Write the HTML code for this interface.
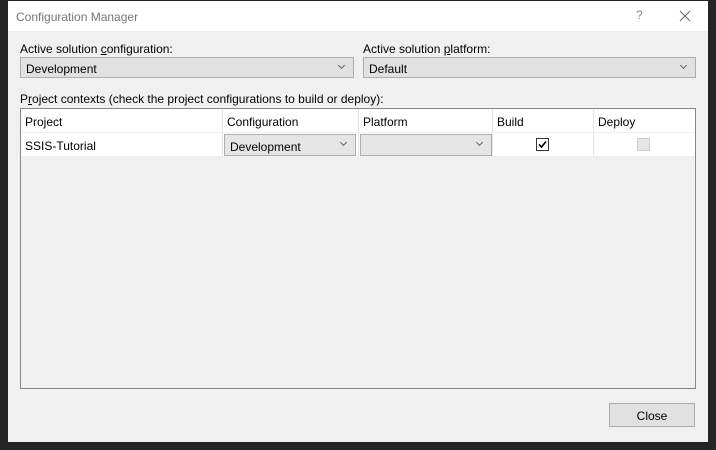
<!DOCTYPE html><html><head><style>
body{margin:0;width:716px;height:450px;background:#252526;position:relative;overflow:hidden;font-family:"Liberation Sans",sans-serif;font-size:12px;color:#000}
.dlg{position:absolute;left:8px;top:1px;width:700px;height:441px;background:#f0f0f0}
.t{position:absolute;left:0;top:0;width:700px;height:30px;background:#fff;}
.a{position:absolute}
.cb{position:absolute;height:21px;border:1px solid #adadad;background:#e1e1e1;box-sizing:border-box;padding:4px 5px 0;}
.dd:after{content:"";position:absolute;right:9px;top:5px;width:4px;height:4px;border-right:1px solid #666;border-bottom:1px solid #666;transform:rotate(45deg)}
.grid{position:absolute;left:12px;top:107px;width:676px;height:281px;border:1px solid #828790;box-sizing:border-box;background:#f0f0f0}
.cell{position:absolute;background:#fff;box-sizing:border-box;padding:6px 4px 0;border-right:1px solid #e5e5e5;border-bottom:1px solid #f0f0f0}
</style></head><body>
<div class="dlg">
<div class="t"><span class="a" style="left:8px;top:9px;color:#777;font-size:12px">Configuration Manager</span>
<span class="a" style="left:628px;top:7px;color:#888">?</span>
<svg class="a" style="left:671px;top:9px" width="12" height="12"><path d="M1 1L11 11M11 1L1 11" stroke="#666" stroke-width="1"/></svg></div>
<span class="a" style="left:12px;top:41px">Active solution <u>c</u>onfiguration:</span>
<div class="cb dd" style="left:12px;top:56px;width:334px">Development</div>
<span class="a" style="left:355px;top:41px">Active solution <u>p</u>latform:</span>
<div class="cb dd" style="left:355px;top:56px;width:333px">Default</div>
<span class="a" style="left:12px;top:91px">P<u>r</u>oject contexts (check the project configurations to build or deploy):</span>
<div class="grid">
<div class="cell" style="left:0;top:0;width:202px;height:24px">Project</div>
<div class="cell" style="left:202px;top:0;width:136px;height:24px">Configuration</div>
<div class="cell" style="left:338px;top:0;width:134px;height:24px">Platform</div>
<div class="cell" style="left:472px;top:0;width:101px;height:24px">Build</div>
<div class="cell" style="left:573px;top:0;width:101px;height:24px;border-right:none">Deploy</div>
<div class="cell" style="left:0;top:24px;width:202px;height:24px">SSIS-Tutorial</div>
<div class="cell" style="left:202px;top:24px;width:136px;height:24px;padding:0"><div class="cb dd" style="left:1px;top:1px;width:132px;height:22px;background:#e5e5e5;padding-top:5px">Development</div></div>
<div class="cell" style="left:338px;top:24px;width:134px;height:24px;padding:0"><div class="cb dd" style="left:1px;top:1px;width:132px;height:22px;background:#e5e5e5"></div></div>
<div class="cell" style="left:472px;top:24px;width:101px;height:24px"><svg class="a" style="left:43px;top:5px" width="13" height="13"><rect x=".5" y=".5" width="12" height="12" fill="#fff" stroke="#333"/><path d="M3 6.5L5.5 9L10 3.5" stroke="#000" stroke-width="1.6" fill="none"/></svg></div>
<div class="cell" style="left:573px;top:24px;width:101px;height:24px;border-right:none"><div class="a" style="left:43px;top:5px;width:13px;height:13px;box-sizing:border-box;border:1px solid #ccc;background:#e6e6e6"></div></div>
</div>
<div class="cb" style="left:601px;top:402px;width:86px;height:24px;text-align:center;padding-top:5px">Close</div>
</div>
</body></html>
